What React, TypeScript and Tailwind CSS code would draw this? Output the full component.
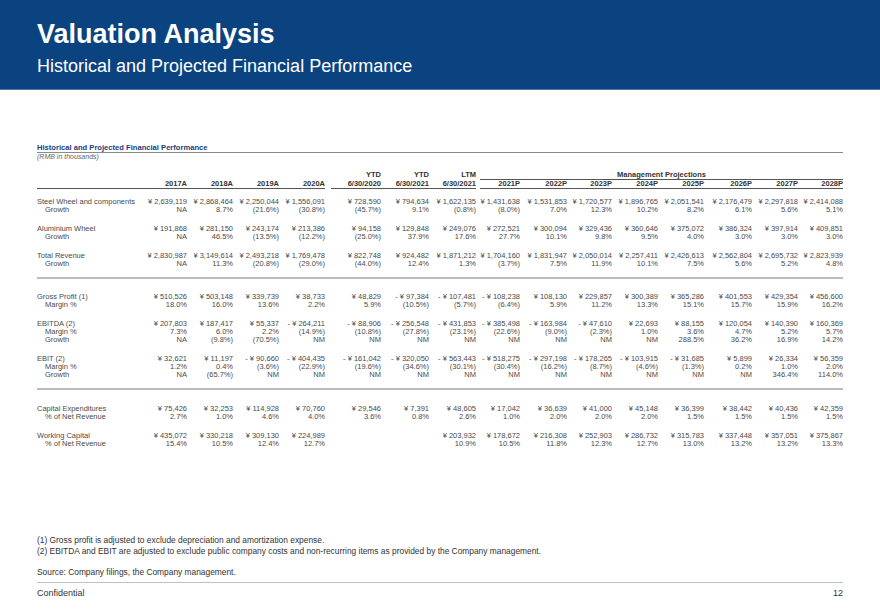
import React from "react";

type Row = { label: string; indent?: boolean; values: string[]; gap?: string };

const GRID =
  "grid grid-cols-[104px_46px_46px_46px_46px_56px_48px_47px_44px_47px_45px_46px_46px_48px_46px_45px]";

const GROUPS: { rows: Row[]; mt: string; sepAfter?: boolean }[] = [
  {
    mt: "mt-[9px]",
    rows: [
      {
        label: "Steel Wheel and components",
        values: ["¥ 2,639,119", "¥ 2,868,464", "¥ 2,250,044", "¥ 1,556,091", "¥ 728,590", "¥ 794,634", "¥ 1,622,135", "¥ 1,431,638", "¥ 1,531,853", "¥ 1,720,577", "¥ 1,896,765", "¥ 2,051,541", "¥ 2,176,479", "¥ 2,297,818", "¥ 2,414,088"],
      },
      {
        label: "Growth",
        indent: true,
        values: ["NA", "8.7%", "(21.6%)", "(30.8%)", "(45.7%)", "9.1%", "(0.8%)", "(8.0%)", "7.0%", "12.3%", "10.2%", "8.2%", "6.1%", "5.6%", "5.1%"],
      },
    ],
  },
  {
    mt: "mt-[11px]",
    rows: [
      {
        label: "Aluminium Wheel",
        values: ["¥ 191,868", "¥ 281,150", "¥ 243,174", "¥ 213,386", "¥ 94,158", "¥ 129,848", "¥ 249,076", "¥ 272,521", "¥ 300,094", "¥ 329,436", "¥ 360,646", "¥ 375,072", "¥ 386,324", "¥ 397,914", "¥ 409,851"],
      },
      {
        label: "Growth",
        indent: true,
        values: ["NA", "46.5%", "(13.5%)", "(12.2%)", "(25.0%)", "37.9%", "17.6%", "27.7%", "10.1%", "9.8%", "9.5%", "4.0%", "3.0%", "3.0%", "3.0%"],
      },
    ],
  },
  {
    mt: "mt-[11px]",
    sepAfter: true,
    rows: [
      {
        label: "Total Revenue",
        values: ["¥ 2,830,987", "¥ 3,149,614", "¥ 2,493,218", "¥ 1,769,478", "¥ 822,748", "¥ 924,482", "¥ 1,871,212", "¥ 1,704,160", "¥ 1,831,947", "¥ 2,050,014", "¥ 2,257,411", "¥ 2,426,613", "¥ 2,562,804", "¥ 2,695,732", "¥ 2,823,939"],
      },
      {
        label: "Growth",
        indent: true,
        values: ["NA", "11.3%", "(20.8%)", "(29.0%)", "(44.0%)", "12.4%", "1.3%", "(3.7%)", "7.5%", "11.9%", "10.1%", "7.5%", "5.6%", "5.2%", "4.8%"],
      },
    ],
  },
  {
    mt: "mt-[14px]",
    rows: [
      {
        label: "Gross Profit (1)",
        values: ["¥ 510,526", "¥ 503,148", "¥ 339,739", "¥ 38,733", "¥ 48,829", "- ¥ 97,384", "- ¥ 107,481", "- ¥ 108,238", "¥ 108,130", "¥ 229,857", "¥ 300,389", "¥ 365,286", "¥ 401,553", "¥ 429,354", "¥ 456,600"],
      },
      {
        label: "Margin %",
        indent: true,
        values: ["18.0%", "16.0%", "13.6%", "2.2%", "5.9%", "(10.5%)", "(5.7%)", "(6.4%)", "5.9%", "11.2%", "13.3%", "15.1%", "15.7%", "15.9%", "16.2%"],
      },
    ],
  },
  {
    mt: "mt-[11px]",
    rows: [
      {
        label: "EBITDA (2)",
        values: ["¥ 207,803", "¥ 187,417", "¥ 55,337", "- ¥ 264,211", "- ¥ 88,906", "- ¥ 256,548", "- ¥ 431,853", "- ¥ 385,498", "- ¥ 163,984", "- ¥ 47,610", "¥ 22,693", "¥ 88,155", "¥ 120,054", "¥ 140,390", "¥ 160,369"],
      },
      {
        label: "Margin %",
        indent: true,
        values: ["7.3%", "6.0%", "2.2%", "(14.9%)", "(10.8%)", "(27.8%)", "(23.1%)", "(22.6%)", "(9.0%)", "(2.3%)", "1.0%", "3.6%", "4.7%", "5.2%", "5.7%"],
      },
      {
        label: "Growth",
        indent: true,
        values: ["NA", "(9.8%)", "(70.5%)", "NM", "NM", "NM", "NM", "NM", "NM", "NM", "NM", "288.5%", "36.2%", "16.9%", "14.2%"],
      },
    ],
  },
  {
    mt: "mt-[11px]",
    sepAfter: true,
    rows: [
      {
        label: "EBIT (2)",
        values: ["¥ 32,621", "¥ 11,197", "- ¥ 90,660", "- ¥ 404,435", "- ¥ 161,042", "- ¥ 320,050", "- ¥ 563,443", "- ¥ 518,275", "- ¥ 297,198", "- ¥ 178,265", "- ¥ 103,915", "- ¥ 31,685", "¥ 5,899", "¥ 26,334", "¥ 56,359"],
      },
      {
        label: "Margin %",
        indent: true,
        values: ["1.2%", "0.4%", "(3.6%)", "(22.9%)", "(19.6%)", "(34.6%)", "(30.1%)", "(30.4%)", "(16.2%)", "(8.7%)", "(4.6%)", "(1.3%)", "0.2%", "1.0%", "2.0%"],
      },
      {
        label: "Growth",
        indent: true,
        values: ["NA", "(65.7%)", "NM", "NM", "NM", "NM", "NM", "NM", "NM", "NM", "NM", "NM", "NM", "346.4%", "114.0%"],
      },
    ],
  },
  {
    mt: "mt-[15px]",
    rows: [
      {
        label: "Capital Expenditures",
        values: ["¥ 75,426", "¥ 32,253", "¥ 114,928", "¥ 70,760", "¥ 29,546", "¥ 7,391", "¥ 48,605", "¥ 17,042", "¥ 36,639", "¥ 41,000", "¥ 45,148", "¥ 36,399", "¥ 38,442", "¥ 40,436", "¥ 42,359"],
      },
      {
        label: "% of Net Revenue",
        indent: true,
        values: ["2.7%", "1.0%", "4.6%", "4.0%", "3.6%", "0.8%", "2.6%", "1.0%", "2.0%", "2.0%", "2.0%", "1.5%", "1.5%", "1.5%", "1.5%"],
      },
    ],
  },
  {
    mt: "mt-[11px]",
    rows: [
      {
        label: "Working Capital",
        values: ["¥ 435,072", "¥ 330,218", "¥ 309,130", "¥ 224,989", "", "", "¥ 203,932", "¥ 178,672", "¥ 216,308", "¥ 252,903", "¥ 286,732", "¥ 315,783", "¥ 337,448", "¥ 357,051", "¥ 375,867"],
      },
      {
        label: "% of Net Revenue",
        indent: true,
        values: ["15.4%", "10.5%", "12.4%", "12.7%", "", "", "10.9%", "10.5%", "11.8%", "12.3%", "12.7%", "13.0%", "13.2%", "13.2%", "13.3%"],
      },
    ],
  },
];

const YEARS = ["2017A", "2018A", "2019A", "2020A", "6/30/2020", "6/30/2021", "6/30/2021", "2021P", "2022P", "2023P", "2024P", "2025P", "2026P", "2027P", "2028P"];

function DataRow({ row }: { row: Row }) {
  return (
    <div className={`${GRID} h-[8px] text-[7.5px] leading-[8px] text-[#4a4a4a]`}>
      <div className={`whitespace-nowrap ${row.indent ? "pl-[8px]" : ""}`}>{row.label}</div>
      {row.values.map((v, i) => (
        <div key={i} className="text-right whitespace-nowrap">
          {v}
        </div>
      ))}
    </div>
  );
}

function Separator() {
  return <div className="mt-[9px] h-[2px] bg-[#bdbdbd]" />;
}

export default function App() {
  return (
    <div className="w-[880px] h-[609px] flex flex-col bg-white font-['Liberation_Sans',Arial,sans-serif] overflow-hidden">
      {/* banner */}
      <div className="h-[90px] bg-[#0b4380] border-b border-[#4f78aa] px-[37px] pt-[19px] text-white">
        <div className="text-[27px] leading-[30px] font-bold">Valuation Analysis</div>
        <div className="text-[18px] leading-[22px] mt-[6px]">Historical and Projected Financial Performance</div>
      </div>

      <div className="px-[37px]">
        <div className="mt-[53px] border-b border-[#8a8a8a] text-[7.6px] leading-[9px] font-bold text-[#1d3d78]">
          Historical and Projected Financial Performance
        </div>
        <div className="text-[7px] leading-[8px] italic text-[#666]">(RMB in thousands)</div>

        {/* column headers */}
        <div className={`${GRID} mt-[10px] text-[7.5px] leading-[8px] font-bold text-[#333]`}>
          <div className="col-span-5" />
          <div className="text-right">YTD</div>
          <div className="text-right">YTD</div>
          <div className="text-right">LTM</div>
          <div className="col-span-8 ml-[4px] text-center border-b border-[#555]">Management Projections</div>
        </div>
        <div className={`${GRID} text-[7.5px] leading-[8px] font-bold text-[#333]`}>
          <div className="border-b-[1.5px] border-[#555]" />
          {YEARS.map((y, i) => (
            <div
              key={i}
              className={`text-right border-b-[1.5px] border-[#555] ${i === 4 ? "ml-[6px]" : ""} ${i === 7 ? "ml-[4px]" : ""}`}
            >
              {y}
            </div>
          ))}
        </div>

        {GROUPS.map((g, gi) => (
          <React.Fragment key={gi}>
            <div className={g.mt}>
              {g.rows.map((r, ri) => (
                <DataRow key={ri} row={r} />
              ))}
            </div>
            {g.sepAfter && <Separator />}
          </React.Fragment>
        ))}
      </div>

      {/* notes & footer */}
      <div className="mt-auto px-[37px] pb-[10px] text-[#333]">
        <div className="text-[8.4px] leading-[11px]">
          (1) Gross profit is adjusted to exclude depreciation and amortization expense.
        </div>
        <div className="text-[8.4px] leading-[11px]">
          (2) EBITDA and EBIT are adjusted to exclude public company costs and non-recurring items as provided by the Company management.
        </div>
        <div className="mt-[10px] text-[8.4px] leading-[11px]">Source: Company filings, the Company management.</div>
        <div className="mt-[4px] border-t border-[#b9c3cf] pt-[5px] flex justify-between text-[9px] leading-[11px]">
          <span>Confidential</span>
          <span>12</span>
        </div>
      </div>
    </div>
  );
}
